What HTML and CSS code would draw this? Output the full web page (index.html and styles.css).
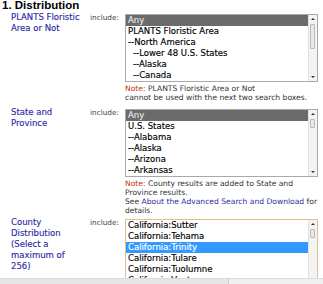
FILE: index.html
```html
<!DOCTYPE html>
<html>
<head>
<meta charset="utf-8">
<link rel="stylesheet" href="styles.css">
</head>
<body>
<div class="page">
  <h2 class="title">1. Distribution</h2>

  <div class="field f1">
    <div class="label">PLANTS Floristic<br>Area or Not</div>
    <div class="inc">include:</div>
    <div class="control">
      <div class="list">
        <div class="opts">
          <div class="opt gray">Any</div>
          <div class="opt">PLANTS Floristic Area</div>
          <div class="opt">--North America</div>
          <div class="opt ind">--Lower 48 U.S. States</div>
          <div class="opt ind">--Alaska</div>
          <div class="opt ind">--Canada</div>
        </div>
        <div class="sb">
          <div class="sb-up"></div>
          <div class="sb-track"><div class="sb-thumb long"></div></div>
          <div class="sb-down"></div>
        </div>
      </div>
      <p class="note"><span class="red">Note:</span> PLANTS Floristic Area or Not<br>cannot be used with the next two search boxes.</p>
    </div>
  </div>

  <div class="field f2">
    <div class="label">State and<br>Province</div>
    <div class="inc">include:</div>
    <div class="control">
      <div class="list">
        <div class="opts">
          <div class="opt gray">Any</div>
          <div class="opt">U.S. States</div>
          <div class="opt">--Alabama</div>
          <div class="opt">--Alaska</div>
          <div class="opt">--Arizona</div>
          <div class="opt">--Arkansas</div>
        </div>
        <div class="sb">
          <div class="sb-up"></div>
          <div class="sb-track"><div class="sb-thumb short"></div></div>
          <div class="sb-down"></div>
        </div>
      </div>
      <p class="note"><span class="red">Note:</span> County results are added to State and<br>Province results.<br>See <a class="link">About the Advanced Search and Download</a> for<br>details.</p>
    </div>
  </div>

  <div class="field f3">
    <div class="label">County<br>Distribution<br>(Select a<br>maximum of<br>256)</div>
    <div class="inc">include:</div>
    <div class="control">
      <div class="list focus">
        <div class="opts">
          <div class="opt">California:Sutter</div>
          <div class="opt">California:Tehama</div>
          <div class="opt blue">California:Trinity</div>
          <div class="opt">California:Tulare</div>
          <div class="opt">California:Tuolumne</div>
          <div class="opt">California:Ventura</div>
        </div>
        <div class="sb">
          <div class="sb-up"></div>
          <div class="sb-track"><div class="sb-thumb short"></div></div>
          <div class="sb-down"></div>
        </div>
      </div>
    </div>
  </div>
</div>
<div class="hscroll"><div class="hthumb"></div></div>
</body>
</html>
```

FILE: styles.css
```css
html, body {
  margin: 0;
  padding: 0;
  background: #fff;
}
body {
  font-family: "DejaVu Sans", Verdana, sans-serif;
  color: #000;
  overflow: hidden;
}
.page {
  padding: 0 0 0 2px;
}
.title {
  font-family: "Liberation Sans", Arial, sans-serif;
  font-weight: bold;
  font-size: 11.5px;
  line-height: 10px;
  height: 10px;
  margin: 0 0 2px 0;
}
.field {
  display: grid;
  grid-template-columns: 79px 35px 193px;
  margin-left: 9px;
  align-items: start;
}
.field.f1 {
  margin-bottom: 5px;
}
.field.f2 {
  margin-bottom: 2px;
}
.label {
  color: #2d2da6;
  font-size: 8.5px;
  line-height: 11px;
  -webkit-text-stroke: 0.15px #2d2da6;
}
.inc {
  color: #444;
  font-size: 7.3px;
  line-height: 11px;
}
.control {
  padding-top: 2px;
}
.list {
  display: flex;
  height: 66px;
  border: 1px solid #a9a9a9;
  background: #fff;
  overflow: hidden;
}
.list.focus {
  border-color: #e3c088;
}
.opts {
  flex: 1;
  overflow: hidden;
}
.opt {
  height: 11px;
  font-size: 8.5px;
  line-height: 11px;
  padding-left: 2px;
  white-space: nowrap;
  -webkit-text-stroke: 0.15px currentColor;
}
.opt.ind {
  padding-left: 7px;
}
.opt.gray {
  background: #6b6b6b;
  color: #e6e6e6;
}
.opt.blue {
  background: #3399ff;
  color: #fff;
}
.sb {
  width: 8px;
  display: flex;
  flex-direction: column;
  background: #f3f3f3;
  border-left: 1px solid #e2e2e2;
}
.sb-up, .sb-down {
  height: 8px;
  position: relative;
}
.sb-up::after, .sb-down::after {
  content: "";
  position: absolute;
  left: 2px;
  width: 0;
  height: 0;
  border-left: 2px solid transparent;
  border-right: 2px solid transparent;
}
.sb-up::after {
  top: 3px;
  border-bottom: 2px solid #333;
}
.sb-down::after {
  top: 3px;
  border-top: 2px solid #333;
}
.sb-track {
  flex: 1;
  padding: 1px 0 0 1px;
}
.sb-thumb {
  width: 5px;
  background: #e9e9e9;
  border: 1px solid #b9b9b9;
  border-radius: 1px;
  box-sizing: border-box;
}
.sb-thumb.long {
  height: 25px;
}
.sb-thumb.short {
  height: 9px;
}
.note {
  margin: 2px 0 0 0;
  font-size: 7.6px;
  line-height: 9px;
  color: #333;
  white-space: nowrap;
}
.red {
  color: #cc3311;
}
.link {
  color: #2d2da6;
}
.hscroll {
  position: fixed;
  left: 0;
  right: 0;
  bottom: 0;
  height: 5px;
  background: #f0f0f0;
  border-top: 1px solid #dcdcdc;
}
.hthumb {
  width: 228px;
  height: 5px;
  background: #e6e6e6;
  border-right: 1px solid #cfcfcf;
}
```
